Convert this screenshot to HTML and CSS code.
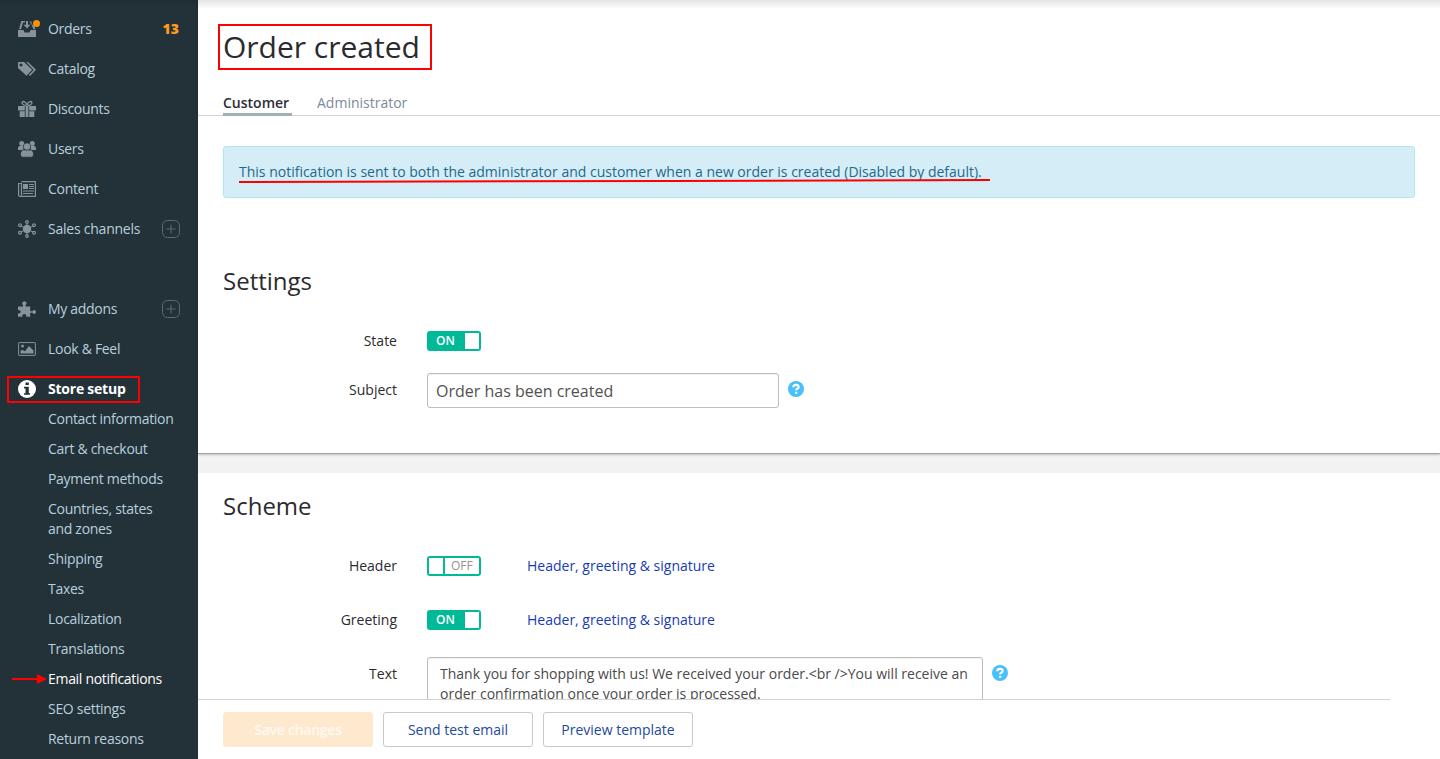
FILE: index.html
```html
<!DOCTYPE html>
<html lang="en">
<head>
<meta charset="utf-8">
<title>Order created</title>
<link rel="stylesheet" href="styles.css">
</head>
<body>
<div class="app">
  <nav class="sidebar">
    <a class="item">
      <svg class="icon" viewBox="0 0 18 18"><path d="M0 10h5.500l1 2.500h5L12.500 10H18v7H0zM3.300 1H7v1.500H5L3 9.300H1zM11.500 1.500h1.800l.7 3 2.500 1.500.8 3.300h-2L13.600 4.500z"/><path d="M8 1h2v3.800h2.500L9 8.500 5.500 4.800H8z"/></svg>
      <span class="dot"></span>
      <span>Orders</span><b class="count">13</b>
    </a>
    <a class="item">
      <svg class="icon" viewBox="0 0 18 18"><path fill-rule="evenodd" d="M0 3q0-1 1-1h5l8.200 7.800-5.700 6L0 8zM3 3.500a1.500 1.500 0 1 0 .01 0z"/><path d="M8.300 2H10l8 7.800-6 6.200-1.200-1.100 4.800-5z"/></svg>
      <span>Catalog</span>
    </a>
    <a class="item">
      <svg class="icon" viewBox="0 0 18 18"><path d="M0 6h6.800v4.500H0zM11.200 6H18v4.500h-6.800zM7.600 6h2.800v11H7.600zM1.700 11.300h5.100V17H1.700zM11.200 11.300h5.100V17h-5.100z"/><g class="line" stroke-width="1.300"><ellipse cx="6.300" cy="3.500" rx="2.500" ry="1.500" transform="rotate(35 6.300 3.500)"/><ellipse cx="11.700" cy="3.500" rx="2.500" ry="1.500" transform="rotate(-35 11.700 3.500)"/></g></svg>
      <span>Discounts</span>
    </a>
    <a class="item">
      <svg class="icon" viewBox="0 0 18 18"><circle cx="3.700" cy="3.400" r="2.500"/><circle cx="14.300" cy="3.400" r="2.500"/><path d="M0 9.500V8q0-2 2-2h3.500v4H.8Q0 10.300 0 9.500zM18 9.500V8q0-2-2-2h-3.500v4h4.700q.8.300.8-.5z"/><circle class="halo" cx="9" cy="6.500" r="3.500"/><path class="halo" d="M2.500 14.500q0-4.500 2.800-4.500h7.400q2.800 0 2.800 4.500 0 2.700-2 2.700h-9q-2 0-2-2.700z"/><circle cx="9" cy="6.500" r="3.100"/></svg>
      <span>Users</span>
    </a>
    <a class="item">
      <svg class="icon" viewBox="0 0 18 18"><path class="line" stroke-width="1.200" d="M3.500 1.600h13.900v14.800H2q-1.400 0-1.400-1.500V3.500h2.900v12"/><path d="M5 4h5v5H5zM11 4h5v1h-5zM11 6h5v1h-5zM11 8h5v1h-5zM5 10.500h11v1H5zM5 13h10v1H5z"/></svg>
      <span>Content</span>
    </a>
    <a class="item">
      <svg class="icon" viewBox="0 0 18 18"><circle cx="9" cy="9" r="4.200"/><path class="line" d="M9 3v12M3 6l12 6M3 12l12-6"/><g class="line" stroke-width="1.200"><circle cx="9" cy="1.900" r="1.300"/><circle cx="9" cy="16.100" r="1.300"/><circle cx="2" cy="5.200" r="1.400"/><circle cx="16" cy="5.200" r="1.400"/><circle cx="2" cy="12.800" r="1.400"/><circle cx="16" cy="12.800" r="1.400"/></g></svg>
      <span class="wide">Sales channels</span>
      <svg class="plus" viewBox="0 0 18 18"><rect x=".5" y=".5" width="17" height="17" rx="5"/><path d="M4.500 9h9M9 4.500v9"/></svg>
    </a>
    <a class="item gap">
      <svg class="icon" viewBox="0 0 18 18"><path d="M0 6.500h5V5Q3.800 4.300 4.200 2.800 4.800 1.300 6.300 1.300t2.200 1.500Q8.800 4.300 7.600 5v1.500h4.600v4.700h2.300q.5-1.200 1.700-1.200Q18 10.200 18 12t-1.800 2q-1.200 0-1.700-1.200h-2.300v4H8.300q.3-2.800-2-2.800t-1.900 2.800H0v-3.300q2.800.1 2.800-1.700T0 10z"/></svg>
      <span>My addons</span>
      <svg class="plus" viewBox="0 0 18 18"><rect x=".5" y=".5" width="17" height="17" rx="5"/><path d="M4.500 9h9M9 4.500v9"/></svg>
    </a>
    <a class="item">
      <svg class="icon" viewBox="0 0 18 18"><rect class="line" x=".6" y="2.600" width="16.800" height="12.800" rx=".5"/><circle cx="4.500" cy="6" r="1.500"/><path d="M2.500 13.500V11l1.500-1.200 3 1.400L11 6l4.500 4.500v3z"/></svg>
      <span>Look &amp; Feel</span>
    </a>
    <a class="item current">
      <svg class="icon" viewBox="0 0 18 18"><circle cx="9" cy="9" r="9"/><path class="cut" d="M7.500 2.500h3.300v2.600H7.500zM6 6.800h4.800v6.400H12v1.600H6v-1.600h1.500V8.400H6z"/></svg>
      <span class="wide">Store setup</span>
      <span class="mark mark-menu"></span>
    </a>
    <div class="sub">
      <a>Contact information</a><a>Cart &amp; checkout</a><a>Payment methods</a><a>Countries, states<br>and zones</a><a>Shipping</a><a>Taxes</a><a>Localization</a><a>Translations</a>
      <a class="active">Email notifications<svg class="arrow" viewBox="0 0 35 10"><path d="M0 4h25V0l10 5-10 5V6H0z"/></svg></a>
      <a>SEO settings</a><a>Return reasons</a>
    </div>
  </nav>

  <main class="main">
    <section class="panel first">
      <h1><span>Order created</span><i class="mark mark-title"></i></h1>
      <div class="tabs"><a class="tab on">Customer</a><a class="tab admin">Administrator</a></div>
      <div class="notice"><span>This notification is sent to both the administrator and customer when a new order is created (Disabled by default).</span>
        <svg class="underline" viewBox="0 0 752 6"><path d="M0 4L430 3 751 2"/></svg>
      </div>
      <h2>Settings</h2>
      <div class="row state"><label>State</label><span class="switch"><b>ON</b><i></i></span></div>
      <div class="row subject"><label>Subject</label><div class="input"><span>Order has been created</span></div><svg class="help" viewBox="0 0 16 16"><circle cx="8" cy="8" r="8"/><path d="M5.300 6.200Q5.400 3.900 8 3.900t2.600 2Q10.600 7.200 9.200 7.800 8.200 8.200 8.200 9.300M8.200 10.700v2"/></svg></div>
    </section>
    <section class="panel second">
      <h2>Scheme</h2>
      <div class="row header"><label>Header</label><span class="switch off"><i></i><b>OFF</b></span><a class="link">Header, greeting &amp; signature</a></div>
      <div class="row greeting"><label>Greeting</label><span class="switch"><b>ON</b><i></i></span><a class="link">Header, greeting &amp; signature</a></div>
      <div class="row text"><label>Text</label><div class="textarea"><span>Thank you for shopping with us! We received your order.&lt;br /&gt;You will receive an</span><br><span>order confirmation once your order is processed.</span></div><svg class="help" viewBox="0 0 16 16"><circle cx="8" cy="8" r="8"/><path d="M5.300 6.200Q5.400 3.900 8 3.900t2.600 2Q10.600 7.200 9.200 7.800 8.200 8.200 8.200 9.300M8.200 10.700v2"/></svg></div>
    </section>
    <footer class="actions"><button class="btn save">Save changes</button><button class="btn">Send test email</button><button class="btn">Preview template</button></footer>
  </main>
  <div class="topshade"></div>
</div>
</body>
</html>
```
FILE: styles.css
```css
* { box-sizing: border-box; }
body { margin: 0; font: 14px/20px "Open Sans", "Noto Sans", sans-serif; color: #2b2b2f; }
.app { position: relative; display: flex; height: 759px; overflow: hidden; background: #fff; }
.topshade { position: absolute; inset: 0 0 auto; height: 9px; background: linear-gradient(rgba(0,0,0,.11), rgba(0,0,0,0)); }

.sidebar { width: 198px; flex: none; padding-top: 9px; background: #233239; color: #b9cfdd; }
.item { position: relative; display: flex; align-items: center; height: 40px; padding: 0 18px; letter-spacing: -.3px; }
.item .wide { letter-spacing: -.23px; }
.item.gap { margin-top: 40px; }
.icon { width: 18px; height: 18px; margin-right: 12px; fill: #87929b; flex: none; }
.icon .line { fill: none; stroke: #87929b; }
.icon .halo { stroke: #233239; stroke-width: .8; }
.dot { position: absolute; left: 33px; top: 11px; width: 7px; height: 7px; border-radius: 50%; background: #ff9000; }
.count { margin-left: auto; margin-right: 1px; color: #ff9a1f; letter-spacing: 0; font-weight: 800; }
.plus { width: 18px; height: 18px; margin-left: auto; fill: none; stroke: #5d6b73; }
.current { color: #fff; font-weight: 700; }
.current .icon { fill: #fff; }
.current .cut { fill: #233239; }
.mark { position: absolute; border: 2px solid #f00; }
.mark-menu { left: 7px; top: 7px; width: 133px; height: 27px; }
.sub { margin-top: -5px; padding-left: 48px; letter-spacing: -.3px; }
.sub a { position: relative; display: block; padding: 5px 0; }
.sub .active { color: #fff; }
.arrow { position: absolute; left: -36px; top: 10px; width: 35px; height: 10px; fill: #f00; }

.main { position: relative; flex: 1; display: flex; flex-direction: column; background: #f2f2f2; }
.panel { background: #fff; }
.first { position: relative; height: 454px; padding-top: 24px; border-bottom: 1px solid #a3a3a3; box-shadow: 0 1px 2px rgba(0,0,0,.2); }
.second { height: 286px; margin-top: 19px; padding-top: 18px; }
h1 { position: relative; margin: 0 0 0 25px; height: 46px; font-size: 30px; line-height: 46px; font-weight: 400; letter-spacing: 0; }
.mark-title { left: -5px; top: 0; width: 214px; height: 46px; }
.tabs { display: flex; height: 46px; padding: 23px 25px 0; border-bottom: 1px solid #d3d3d6; }
.tab { height: 23px; color: #7c8a99; }
.tab.on { width: 69px; color: #2c2d3a; font-weight: 600; border-bottom: 3px solid #9fafb2; }
.admin { margin-left: 25px; }
.notice { position: relative; height: 52px; margin: 30px 25px 0; padding: 15px; border: 1px solid #aee8f0; border-radius: 3px; background: #d5edf7; color: #216a8c; }
.underline { position: absolute; left: 15px; top: 31px; width: 752px; height: 6px; fill: none; stroke: #f00; stroke-width: 2; }
h2 { margin: 0; padding-left: 25px; font-size: 24px; line-height: 30px; font-weight: 400; }
.first h2 { margin-top: 68px; }
.row { display: flex; align-items: flex-start; }
.row label { width: 199px; margin-right: 30px; text-align: right; }
.state { margin-top: 35px; }
.subject { margin-top: 22px; }
.subject label { margin-top: 7px; }
.switch { display: flex; width: 54px; height: 20px; border: 2px solid #00b996; border-radius: 3px; background: #00b996; color: #fff; font-size: 12px; line-height: 15px; }
.switch b { width: 36px; padding-left: 7px; font-weight: 600; }
.switch i { width: 14px; height: 16px; background: #fff; }
.switch.off { background: #fff; color: #929292; }
.switch.off i { width: 16px; border-right: 2px solid #00b996; }
.switch.off b { width: 34px; padding-left: 6px; font-weight: 400; }
.input { width: 352px; height: 35px; border: 1px solid #bdbdbd; border-radius: 3px; padding: 7px 8px; font-size: 16px; color: #515151; box-shadow: inset 0 1px 1px rgba(0,0,0,.06); }
.help { width: 16px; height: 16px; margin: 8px 0 0 9px; fill: #4ac0fb; }
.help path { fill: none; stroke: #fff; stroke-width: 2.200; }
.header { margin-top: 35px; }
.greeting { margin-top: 34px; }
.link { margin-left: 46px; color: #183cb4; }
.text { margin-top: 27px; }
.text label { margin-top: 7px; }
.textarea { width: 556px; height: 70px; border: 1px solid #bdbdbd; border-radius: 3px; padding: 6px 12px; color: #4a4a4a; white-space: nowrap; box-shadow: inset 0 1px 1px rgba(0,0,0,.06); }
.actions { position: absolute; left: 0; right: 0; bottom: 0; display: flex; gap: 10px; height: 60px; padding: 13px 25px 0; background: #fff; }
.actions::before { content: ""; position: absolute; left: 0; right: 50px; top: 0; height: 1px; background: #d3d3d3; }
.btn { width: 150px; height: 35px; padding: 0; border: 1px solid #c9c9c9; border-radius: 3px; background: #fff; color: #234a9c; font: inherit; }
.btn.save { border-color: #ffe9ce; background: #ffe9ce; color: #fff9f0; font-weight: 600; letter-spacing: -.25px; }
```
